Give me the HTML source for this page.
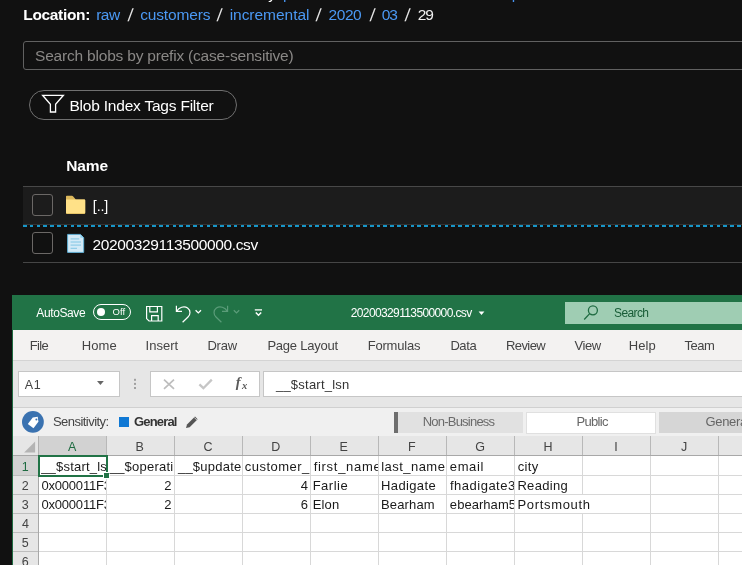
<!DOCTYPE html>
<html><head><meta charset="utf-8"><title>Blob container and Excel</title>
<style>
html,body{margin:0;padding:0}
body{width:742px;height:565px;overflow:hidden;position:relative;background:#111111;font-family:"Liberation Sans",sans-serif}
.a{position:absolute}
.t{position:absolute;white-space:pre;line-height:1;font-family:"Liberation Sans",sans-serif}
.clip{position:absolute;overflow:hidden}
svg{position:absolute;left:0;top:0;overflow:visible}
</style></head><body><div id="root" style="position:absolute;left:0;top:0;width:742px;height:565px;overflow:hidden;will-change:transform">
<span class="t" style="left:auto;right:466px;top:-14px;font-size:15.5px;color:#fff">key</span>
<span class="t" style="left:283px;top:-14.1px;font-size:15.5px;color:#4894f0">p</span>
<span class="t" style="left:511.8px;top:-14.1px;font-size:15.5px;color:#4894f0">p</span>
<div class="a" style="left:23px;top:41px;width:740px;height:27px;background:#111111;border:1px solid #616161;border-radius:3px;"></div>
<div class="a" style="left:29px;top:90px;width:206px;height:28px;border:1px solid #707070;border-radius:15px;"></div>
<svg width="742" height="565"><path d="M42.6 95.3 H63.4 L55.6 104.3 V112 H50.4 V104.3 Z" fill="none" stroke="#fff" stroke-width="1.3" stroke-linejoin="miter"/></svg>
<div class="a" style="left:23px;top:186px;width:719px;height:39px;background:#1c1c1c;border-top:1px solid #484848;box-sizing:border-box;"></div>
<div class="a" style="left:23px;top:224px;width:719px;height:1px;background:#333;"></div>
<div class="a" style="left:23px;top:224.7px;width:719px;height:2px;background:repeating-linear-gradient(90deg,#1796c8 0,#1796c8 3.7px,transparent 3.7px,transparent 6.8px);"></div>
<div class="a" style="left:23px;top:262px;width:719px;height:1px;background:#464646;"></div>
<div class="a" style="left:32px;top:194px;width:19px;height:20px;border:1px solid #6b6866;border-radius:3px;"></div>
<div class="a" style="left:32px;top:232px;width:19px;height:20px;border:1px solid #6b6866;border-radius:3px;"></div>
<svg width="742" height="565">
<path d="M66 196.6 q0 -0.8 0.8 -0.8 H72 q0.6 0 1 0.5 L75.8 199.6 H84.4 q0.8 0 0.8 0.8 V213.2 q0 0.8 -0.8 0.8 H66.8 q-0.8 0 -0.8 -0.8 Z" fill="#dcb85c"/>
<path d="M66 199.6 H84.4 q0.8 0 0.8 0.8 V212.4 q0 0.8 -0.8 0.8 H66.8 q-0.8 0 -0.8 -0.8 Z" fill="#ffe188"/>
<path d="M66 198.2 H73 L74.6 199.8 H66 Z" fill="#ffe188" opacity="0"/>
</svg>
<svg width="742" height="565">
<path d="M67.6 234.4 H80.4 L83.7 237.7 V252.4 H67.6 Z" fill="#d3eaf7" stroke="#5fb6dc" stroke-width="0.9"/>
<path d="M80.4 234.4 V237.7 H83.7 Z" fill="#8fd0ee"/>
<path d="M70.6 238.9 H79.2 M70.6 242 H81 M70.6 245.1 H81 M70.6 248.3 H77" stroke="#6cbde0" stroke-width="0.8" fill="none"/>
</svg>
<div class="a" style="left:12px;top:295px;width:730px;height:35px;background:#217346;"></div>
<div class="a" style="left:12px;top:330px;width:1px;height:235px;background:#1e6b41;"></div>
<div class="a" style="left:13px;top:330px;width:729px;height:30px;background:#f3f2f1;"></div>
<div class="a" style="left:13px;top:360px;width:729px;height:1px;background:#d4d4d4;"></div>
<div class="a" style="left:13px;top:361px;width:729px;height:46px;background:#e6e6e6;"></div>
<div class="a" style="left:13px;top:407px;width:729px;height:1px;background:#d0d0d0;"></div>
<div class="a" style="left:13px;top:408px;width:729px;height:28px;background:#f0f0f0;"></div>
<div class="a" style="left:92.5px;top:304px;width:36px;height:13.5px;border:1px solid #fff;border-radius:8px;"></div>
<div class="a" style="left:96.8px;top:308px;width:8px;height:8px;background:#fff;border-radius:50%;"></div>
<svg width="742" height="565" fill="none" stroke="#fff" stroke-width="1.2">
<path d="M146.6 306.5 H161.8 V321 H149 L146.6 318.6 Z"/>
<path d="M149.8 306.5 V311.8 H157.4 V306.5"/>
<path d="M151.6 321 V315.6 H158.2 V321"/>
<path d="M176.4 305.8 V311.4 H182 M176.6 311.2 C179 307.4 184 305.6 187.6 308 C190.8 310.4 190.6 314.4 188 317 L182.6 322.2" />
<path d="M195.6 310.2 L198.3 312.9 L201 310.2" stroke-width="1.3"/>
<g stroke="#5b9c79">
<path d="M227.6 305.8 V311.4 H222 M227.4 311.2 C225 307.4 220 305.6 216.4 308 C213.2 310.4 213.4 314.4 216 317 L221.4 322.2" />
<path d="M233.8 310.2 L236.5 312.9 L239.2 310.2" stroke-width="1.3"/>
</g>
<path d="M254.8 309.9 H262" stroke-width="1.3"/>
<path d="M255.8 312.5 L258.5 315.2 L261.2 312.5" stroke-width="1.5"/>
<path d="M478.6 311.4 H484.4 L481.5 315 Z" fill="#fff" stroke="none"/>
</svg>
<div class="a" style="left:565px;top:302px;width:177px;height:22px;background:#9fcdb3;"></div>
<svg width="742" height="565" fill="none" stroke="#1e6b41" stroke-width="1.3">
<circle cx="592.9" cy="310.3" r="4.5"/><path d="M589.7 313.6 L584.2 319.5"/></svg>
<div class="a" style="left:18px;top:371px;width:100px;height:24px;background:#fff;border:1px solid #c6c6c6;"></div>
<div class="a" style="left:150px;top:371px;width:108px;height:24px;background:#fff;border:1px solid #c6c6c6;"></div>
<div class="a" style="left:263px;top:371px;width:500px;height:24px;background:#fff;border:1px solid #c6c6c6;"></div>
<svg width="742" height="565">
<path d="M97 381 H103.8 L100.4 385 Z" fill="#666"/>
<g fill="#a0a0a0"><rect x="134" y="378.8" width="2" height="2"/><rect x="134" y="382.9" width="2" height="2"/><rect x="134" y="387" width="2" height="2"/></g>
<path d="M164 379.6 L174 388.8 M174 379.6 L164 388.8" stroke="#bdbdbd" stroke-width="1.7" fill="none"/>
<path d="M199.4 384.4 L203.4 388.2 L211.8 379.6" stroke="#c6c6c6" stroke-width="2.3" fill="none"/>
</svg>
<svg width="742" height="565">
<circle cx="32.9" cy="421.9" r="10.9" fill="#3a72b0"/>
<path d="M27.6 423.2 L33.4 417.4 H38.4 V422.4 L32.6 428.2 Z" fill="#fff" transform="rotate(-8 33 422)"/>
<circle cx="36.4" cy="419.6" r="1" fill="#3a72b0"/>
</svg>
<div class="a" style="left:118.8px;top:416.9px;width:10.4px;height:10.2px;background:#0f78d4;"></div>
<svg width="742" height="565"><path d="M186 428 L187 424.6 L195 416.6 L197.6 419.2 L189.6 427.2 Z" fill="#555"/><path d="M194.2 417.4 L196.8 420" stroke="#f0f0f0" stroke-width="0.8"/></svg>
<div class="a" style="left:394px;top:411.5px;width:129px;height:21.5px;background:#e1e1e1;"></div>
<div class="a" style="left:394px;top:411.5px;width:4px;height:21.5px;background:#6e6e6e;"></div>
<div class="a" style="left:526px;top:411.5px;width:128px;height:20px;background:#fff;border:1px solid #e0e0e0;"></div>
<div class="a" style="left:659px;top:411.5px;width:90px;height:21.5px;background:#d6d6d6;"></div>
<div class="a" style="left:13px;top:436px;width:729px;height:20px;background:#e6e6e6;"></div>
<div class="a" style="left:13px;top:456px;width:25px;height:109px;background:#e6e6e6;"></div>
<div class="a" style="left:38px;top:456px;width:704px;height:109px;background:#fff;"></div>
<div class="a" style="left:38px;top:436px;width:68px;height:20px;background:#d2d2d2;"></div>
<div class="a" style="left:13px;top:456px;width:25px;height:19px;background:#d2d2d2;"></div>
<svg width="742" height="565"><path d="M35.1 441.6 V452.6 H24.1 Z" fill="#b4b4b4"/></svg>
<div class="a" style="left:38px;top:436px;width:1px;height:20px;background:#b0b0b0;"></div>
<div class="a" style="left:106px;top:436px;width:1px;height:20px;background:#b8b8b8;"></div>
<div class="a" style="left:174px;top:436px;width:1px;height:20px;background:#b8b8b8;"></div>
<div class="a" style="left:242px;top:436px;width:1px;height:20px;background:#b8b8b8;"></div>
<div class="a" style="left:310px;top:436px;width:1px;height:20px;background:#b8b8b8;"></div>
<div class="a" style="left:378px;top:436px;width:1px;height:20px;background:#b8b8b8;"></div>
<div class="a" style="left:446px;top:436px;width:1px;height:20px;background:#b8b8b8;"></div>
<div class="a" style="left:514px;top:436px;width:1px;height:20px;background:#b8b8b8;"></div>
<div class="a" style="left:582px;top:436px;width:1px;height:20px;background:#b8b8b8;"></div>
<div class="a" style="left:650px;top:436px;width:1px;height:20px;background:#b8b8b8;"></div>
<div class="a" style="left:718px;top:436px;width:1px;height:20px;background:#b8b8b8;"></div>
<div class="a" style="left:786px;top:436px;width:1px;height:20px;background:#b8b8b8;"></div>
<div class="a" style="left:13px;top:455px;width:729px;height:1px;background:#a8a8a8;"></div>
<div class="a" style="left:13px;top:475.0px;width:25px;height:1px;background:#bdbdbd;"></div>
<div class="a" style="left:39px;top:475.0px;width:703px;height:1px;background:#d8d8d8;"></div>
<div class="a" style="left:13px;top:494.0px;width:25px;height:1px;background:#bdbdbd;"></div>
<div class="a" style="left:39px;top:494.0px;width:703px;height:1px;background:#d8d8d8;"></div>
<div class="a" style="left:13px;top:513.0px;width:25px;height:1px;background:#bdbdbd;"></div>
<div class="a" style="left:39px;top:513.0px;width:703px;height:1px;background:#d8d8d8;"></div>
<div class="a" style="left:13px;top:532.0px;width:25px;height:1px;background:#bdbdbd;"></div>
<div class="a" style="left:39px;top:532.0px;width:703px;height:1px;background:#d8d8d8;"></div>
<div class="a" style="left:13px;top:551.0px;width:25px;height:1px;background:#bdbdbd;"></div>
<div class="a" style="left:39px;top:551.0px;width:703px;height:1px;background:#d8d8d8;"></div>
<div class="a" style="left:13px;top:570.0px;width:25px;height:1px;background:#bdbdbd;"></div>
<div class="a" style="left:39px;top:570.0px;width:703px;height:1px;background:#d8d8d8;"></div>
<div class="a" style="left:38px;top:456px;width:1px;height:109px;background:#a8a8a8;"></div>
<div class="a" style="left:106px;top:456px;width:1px;height:109px;background:#d8d8d8;"></div>
<div class="a" style="left:174px;top:456px;width:1px;height:109px;background:#d8d8d8;"></div>
<div class="a" style="left:242px;top:456px;width:1px;height:109px;background:#d8d8d8;"></div>
<div class="a" style="left:310px;top:456px;width:1px;height:109px;background:#d8d8d8;"></div>
<div class="a" style="left:378px;top:456px;width:1px;height:109px;background:#d8d8d8;"></div>
<div class="a" style="left:446px;top:456px;width:1px;height:109px;background:#d8d8d8;"></div>
<div class="a" style="left:514px;top:456px;width:1px;height:109px;background:#d8d8d8;"></div>
<div class="a" style="left:582px;top:456px;width:1px;height:38px;background:#d8d8d8;"></div>
<div class="a" style="left:582px;top:513px;width:1px;height:52px;background:#d8d8d8;"></div>
<div class="a" style="left:650px;top:456px;width:1px;height:109px;background:#d8d8d8;"></div>
<div class="a" style="left:718px;top:456px;width:1px;height:109px;background:#d8d8d8;"></div>
<div class="a" style="left:786px;top:456px;width:1px;height:109px;background:#d8d8d8;"></div>
<div class="a" style="left:37.6px;top:455.2px;width:66.6px;height:17.4px;border:2px solid #217346;"></div>
<div class="a" style="left:104px;top:473.3px;width:5px;height:4.5px;background:#217346;border:1px solid #fff;margin:-1px;"></div>
<span class="t" style="left:23.25px;top:6.68px;font-size:15.5px;color:#ffffff;letter-spacing:-0.330px;font-weight:700;">Location:</span>
<span class="t" style="left:96.29px;top:6.68px;font-size:15.5px;color:#4b99f4;letter-spacing:-0.581px;">raw</span>
<span class="t" style="left:127.95px;top:7.12px;font-size:17.5px;color:#e6e6e6;transform:skewX(-6deg);">/</span>
<span class="t" style="left:140.14px;top:6.68px;font-size:15.5px;color:#4b99f4;letter-spacing:-0.154px;">customers</span>
<span class="t" style="left:217.35px;top:7.12px;font-size:17.5px;color:#e6e6e6;transform:skewX(-6deg);">/</span>
<span class="t" style="left:229.63px;top:6.68px;font-size:15.5px;color:#4b99f4;letter-spacing:-0.027px;">incremental</span>
<span class="t" style="left:316.35px;top:7.12px;font-size:17.5px;color:#e6e6e6;transform:skewX(-6deg);">/</span>
<span class="t" style="left:328.47px;top:6.68px;font-size:15.5px;color:#4b99f4;letter-spacing:-0.403px;">2020</span>
<span class="t" style="left:370.35px;top:7.12px;font-size:17.5px;color:#e6e6e6;transform:skewX(-6deg);">/</span>
<span class="t" style="left:381.74px;top:6.68px;font-size:15.5px;color:#4b99f4;letter-spacing:-1.150px;">03</span>
<span class="t" style="left:405.35px;top:7.12px;font-size:17.5px;color:#e6e6e6;transform:skewX(-6deg);">/</span>
<span class="t" style="left:417.77px;top:6.68px;font-size:15.5px;color:#f0f0f0;letter-spacing:-1.128px;">29</span>
<span class="t" style="left:35.07px;top:47.63px;font-size:15.5px;color:#8a8886;letter-spacing:-0.201px;">Search blobs by prefix (case-sensitive)</span>
<span class="t" style="left:69.47px;top:97.63px;font-size:15.5px;color:#ffffff;letter-spacing:-0.213px;">Blob Index Tags Filter</span>
<span class="t" style="left:66.13px;top:157.63px;font-size:15.5px;color:#ffffff;letter-spacing:-0.085px;font-weight:700;">Name</span>
<span class="t" style="left:92.78px;top:198.70px;font-size:14.3px;color:#ffffff;letter-spacing:-0.106px;">[..]</span>
<span class="t" style="left:92.47px;top:236.88px;font-size:15.5px;color:#ffffff;letter-spacing:-0.361px;">20200329113500000.csv</span>
<span class="t" style="left:36.31px;top:306.59px;font-size:12px;color:#ffffff;letter-spacing:-0.389px;">AutoSave</span>
<span class="t" style="left:112.46px;top:307.36px;font-size:9.5px;color:#ffffff;letter-spacing:0.100px;">Off</span>
<span class="t" style="left:350.77px;top:306.84px;font-size:12px;color:#ffffff;letter-spacing:-0.624px;">20200329113500000.csv</span>
<span class="t" style="left:614.12px;top:306.84px;font-size:12px;color:#185c37;letter-spacing:-0.623px;">Search</span>
<span class="t" style="left:29.64px;top:339.00px;font-size:13px;color:#444444;letter-spacing:-0.650px;">File</span>
<span class="t" style="left:81.64px;top:339.00px;font-size:13px;color:#444444;letter-spacing:0.170px;">Home</span>
<span class="t" style="left:145.59px;top:339.00px;font-size:13px;color:#444444;letter-spacing:0.007px;">Insert</span>
<span class="t" style="left:207.40px;top:339.00px;font-size:13px;color:#444444;letter-spacing:-0.205px;">Draw</span>
<span class="t" style="left:267.40px;top:339.00px;font-size:13px;color:#444444;letter-spacing:-0.223px;">Page Layout</span>
<span class="t" style="left:367.64px;top:339.00px;font-size:13px;color:#444444;letter-spacing:-0.189px;">Formulas</span>
<span class="t" style="left:450.40px;top:339.00px;font-size:13px;color:#444444;letter-spacing:-0.413px;">Data</span>
<span class="t" style="left:506.05px;top:339.00px;font-size:13px;color:#444444;letter-spacing:-0.603px;">Review</span>
<span class="t" style="left:574.46px;top:339.00px;font-size:13px;color:#444444;letter-spacing:-0.441px;">View</span>
<span class="t" style="left:628.64px;top:339.00px;font-size:13px;color:#444444;letter-spacing:0.157px;">Help</span>
<span class="t" style="left:684.39px;top:339.00px;font-size:13px;color:#444444;letter-spacing:-0.464px;">Team</span>
<span class="t" style="left:24.81px;top:379.42px;font-size:12.5px;color:#444;letter-spacing:0.716px;">A1</span>
<span class="t" style="left:235.75px;top:375.26px;font-size:14.5px;color:#5a5a5a;font-weight:700;font-style:italic;font-family:'Liberation Serif',serif;">f</span>
<span class="t" style="left:241.88px;top:380.81px;font-size:10.5px;color:#5a5a5a;font-weight:700;font-style:italic;font-family:'Liberation Serif',serif;">x</span>
<span class="t" style="left:275.93px;top:377.75px;font-size:13px;color:#333;letter-spacing:0.235px;">__$start_lsn</span>
<span class="t" style="left:52.95px;top:415.25px;font-size:13px;color:#444;letter-spacing:-0.541px;">Sensitivity:</span>
<span class="t" style="left:134.12px;top:415.25px;font-size:13px;color:#333;letter-spacing:-0.853px;font-weight:700;">General</span>
<span class="t" style="left:422.69px;top:415.25px;font-size:13px;color:#6a6a6a;letter-spacing:-0.777px;">Non-Business</span>
<span class="t" style="left:576.40px;top:415.25px;font-size:13px;color:#666;letter-spacing:-0.677px;">Public</span>
<span class="t" style="left:705.38px;top:415.25px;font-size:13px;color:#666;letter-spacing:-0.292px;">General</span>
<span class="t" style="left:67.88px;top:440.67px;font-size:12.5px;color:#1e6b41;">A</span>
<span class="t" style="left:135.60px;top:440.67px;font-size:12.5px;color:#444;">B</span>
<span class="t" style="left:203.56px;top:440.67px;font-size:12.5px;color:#444;">C</span>
<span class="t" style="left:271.31px;top:440.67px;font-size:12.5px;color:#444;">D</span>
<span class="t" style="left:339.51px;top:440.67px;font-size:12.5px;color:#444;">E</span>
<span class="t" style="left:407.96px;top:440.67px;font-size:12.5px;color:#444;">F</span>
<span class="t" style="left:475.27px;top:440.67px;font-size:12.5px;color:#444;">G</span>
<span class="t" style="left:543.44px;top:440.67px;font-size:12.5px;color:#444;">H</span>
<span class="t" style="left:614.33px;top:440.67px;font-size:12.5px;color:#444;">I</span>
<span class="t" style="left:681.03px;top:440.67px;font-size:12.5px;color:#444;">J</span>
<span class="t" style="left:21.64px;top:460.62px;font-size:12.5px;color:#1e6b41;">1</span>
<span class="t" style="left:21.68px;top:479.62px;font-size:12.5px;color:#444;">2</span>
<span class="t" style="left:21.85px;top:498.62px;font-size:12.5px;color:#444;">3</span>
<span class="t" style="left:21.88px;top:517.62px;font-size:12.5px;color:#444;">4</span>
<span class="t" style="left:21.70px;top:536.62px;font-size:12.5px;color:#444;">5</span>
<span class="t" style="left:21.81px;top:555.62px;font-size:12.5px;color:#444;">6</span>
<div class="clip" style="left:39px;top:457px;width:67px;height:18px"><span class="t" style="left:2.18px;top:2.90px;font-size:13px;color:#1a1a1a;letter-spacing:0.197px;">__$start_lsn</span></div>
<div class="clip" style="left:107px;top:457px;width:67px;height:18px"><span class="t" style="left:2.71px;top:2.90px;font-size:13px;color:#1a1a1a;letter-spacing:0.230px;">__$operati</span></div>
<div class="clip" style="left:175px;top:457px;width:67px;height:18px"><span class="t" style="left:2.93px;top:2.90px;font-size:13px;color:#1a1a1a;letter-spacing:0.232px;">__$update</span></div>
<div class="clip" style="left:243px;top:457px;width:67px;height:18px"><span class="t" style="left:1.73px;top:2.90px;font-size:13px;color:#1a1a1a;letter-spacing:0.480px;">customer_</span></div>
<div class="clip" style="left:311px;top:457px;width:67px;height:18px"><span class="t" style="left:2.69px;top:2.90px;font-size:13px;color:#1a1a1a;letter-spacing:0.701px;">first_name</span></div>
<span class="t" style="left:381.20px;top:459.90px;font-size:13px;color:#1a1a1a;letter-spacing:0.464px;">last_name</span>
<span class="t" style="left:449.86px;top:459.90px;font-size:13px;color:#1a1a1a;letter-spacing:0.600px;">email</span>
<span class="t" style="left:517.73px;top:459.90px;font-size:13px;color:#1a1a1a;letter-spacing:0.354px;">city</span>
<div class="clip" style="left:39px;top:476px;width:67px;height:18px"><span class="t" style="left:2.56px;top:2.90px;font-size:13px;color:#1a1a1a;letter-spacing:-0.219px;">0x000011F3</span></div>
<span class="t" style="left:164.33px;top:478.90px;font-size:13px;color:#1a1a1a;">2</span>
<div class="clip" style="left:39px;top:495px;width:67px;height:18px"><span class="t" style="left:2.56px;top:2.90px;font-size:13px;color:#1a1a1a;letter-spacing:-0.219px;">0x000011F3</span></div>
<span class="t" style="left:164.33px;top:497.90px;font-size:13px;color:#1a1a1a;">2</span>
<span class="t" style="left:300.75px;top:478.90px;font-size:13px;color:#1a1a1a;">4</span>
<span class="t" style="left:300.68px;top:497.90px;font-size:13px;color:#1a1a1a;">6</span>
<span class="t" style="left:312.64px;top:478.90px;font-size:13px;color:#1a1a1a;letter-spacing:0.518px;">Farlie</span>
<span class="t" style="left:312.64px;top:497.90px;font-size:13px;color:#1a1a1a;letter-spacing:0.190px;">Elon</span>
<span class="t" style="left:381.05px;top:478.90px;font-size:13px;color:#1a1a1a;letter-spacing:0.361px;">Hadigate</span>
<span class="t" style="left:381.05px;top:497.90px;font-size:13px;color:#1a1a1a;letter-spacing:0.132px;">Bearham</span>
<div class="clip" style="left:447px;top:476px;width:67px;height:18px"><span class="t" style="left:2.94px;top:2.90px;font-size:13px;color:#1a1a1a;letter-spacing:0.504px;">fhadigate3</span></div>
<div class="clip" style="left:447px;top:495px;width:67px;height:18px"><span class="t" style="left:2.86px;top:2.90px;font-size:13px;color:#1a1a1a;letter-spacing:0.045px;">ebearham5</span></div>
<span class="t" style="left:517.40px;top:478.90px;font-size:13px;color:#1a1a1a;letter-spacing:0.319px;">Reading</span>
<span class="t" style="left:517.40px;top:497.90px;font-size:13px;color:#1a1a1a;letter-spacing:0.680px;">Portsmouth</span>
</div></body></html>
